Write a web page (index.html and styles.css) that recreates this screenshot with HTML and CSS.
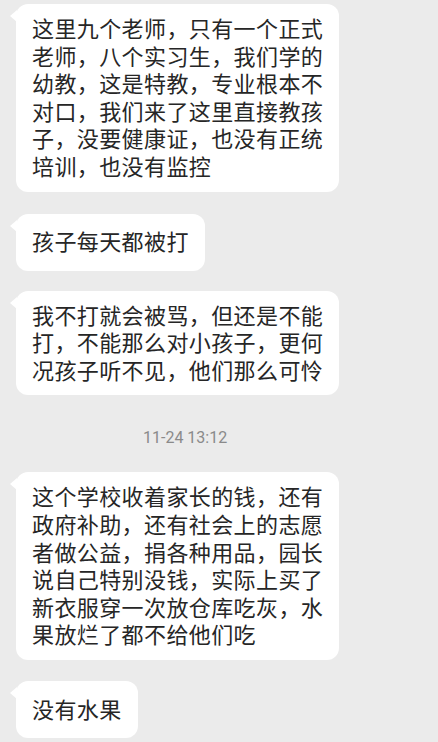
FILE: index.html
```html
<!DOCTYPE html>
<html lang="zh-CN">
<head>
<meta charset="utf-8">
<title>聊天记录</title>
<link rel="stylesheet" href="styles.css">
</head>
<body>
<div class="chat">
  <div class="bubble b1">这里九个老师，只有一个正式<br>老师，八个实习生，我们学的<br>幼教，这是特教，专业根本不<br>对口，我们来了这里直接教孩<br>子，没要健康证，也没有正统<br>培训，也没有监控</div>
  <div class="bubble single b2">孩子每天都被打</div>
  <div class="bubble b3">我不打就会被骂，但还是不能<br>打，不能那么对小孩子，更何<br>况孩子听不见，他们那么可怜</div>
  <div class="time">11-24 13:12</div>
  <div class="bubble b4">这个学校收着家长的钱，还有<br>政府补助，还有社会上的志愿<br>者做公益，捐各种用品，园长<br>说自己特别没钱，实际上买了<br>新衣服穿一次放仓库吃灰，水<br>果放烂了都不给他们吃</div>
  <div class="bubble single b5">没有水果</div>
</div>
</body>
</html>
```

FILE: styles.css
```css
html, body {
  margin: 0;
  padding: 0;
  background: #ebebeb;
}

body {
  width: 438px;
  height: 742px;
  overflow: hidden;
}

.chat {
  display: flex;
  flex-direction: column;
  align-items: flex-start;
  padding: 4px 0 0 16px;
  border-left: 4px solid #f0f0f0;
  margin-left: -4px;
  min-height: 742px;
  box-sizing: border-box;
}

.bubble {
  position: relative;
  background: #ffffff;
  border-radius: 12px;
  padding: 12px 16px 10px 16px;
  font-family: "Liberation Sans", "Noto Sans CJK SC", sans-serif;
  font-size: 22px;
  letter-spacing: 0.4px;
  line-height: 27.6px;
  color: #262626;
  white-space: nowrap;
  box-sizing: border-box;
}

.bubble::before {
  content: "";
  position: absolute;
  left: -6px;
  top: 6px;
  width: 0;
  height: 0;
  border-top: 6px solid transparent;
  border-bottom: 6px solid transparent;
  border-right: 7px solid #ffffff;
}

.single {
  min-height: 57px;
  display: flex;
  align-items: center;
}

.b2 { margin-top: 22px; }
.b3 { margin-top: 20px; }
.b4 { margin-top: 0; }
.b5 { margin-top: 21px; }

.time {
  margin: 33px 0 24px 0;
  padding-left: 127px;
  font-family: Roboto, "Liberation Sans", sans-serif;
  font-size: 16px;
  line-height: 20px;
  color: #8a8a8a;
}
```
